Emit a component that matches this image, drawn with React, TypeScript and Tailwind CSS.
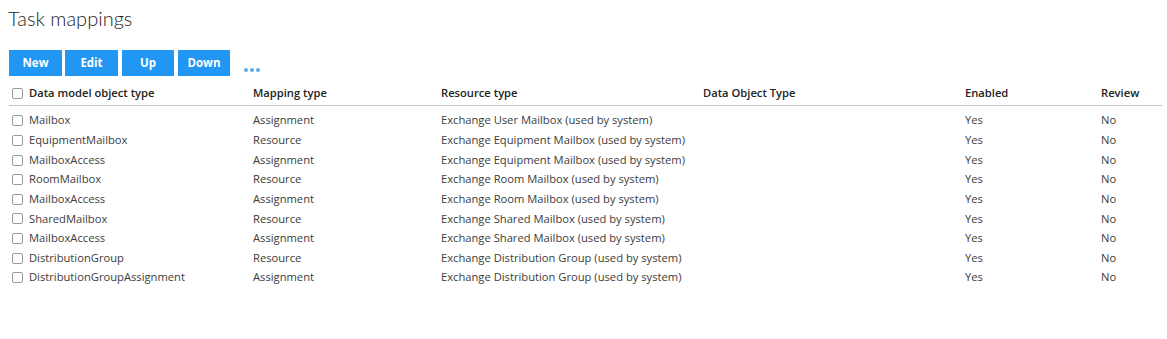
import React from "react";

// rows of the task mapping table
const rows = [
  { type: "Mailbox", mapping: "Assignment", resource: "Exchange User Mailbox (used by system)" },
  { type: "EquipmentMailbox", mapping: "Resource", resource: "Exchange Equipment Mailbox (used by system)" },
  { type: "MailboxAccess", mapping: "Assignment", resource: "Exchange Equipment Mailbox (used by system)" },
  { type: "RoomMailbox", mapping: "Resource", resource: "Exchange Room Mailbox (used by system)" },
  { type: "MailboxAccess", mapping: "Assignment", resource: "Exchange Room Mailbox (used by system)" },
  { type: "SharedMailbox", mapping: "Resource", resource: "Exchange Shared Mailbox (used by system)" },
  { type: "MailboxAccess", mapping: "Assignment", resource: "Exchange Shared Mailbox (used by system)" },
  { type: "DistributionGroup", mapping: "Resource", resource: "Exchange Distribution Group (used by system)" },
  { type: "DistributionGroupAssignment", mapping: "Assignment", resource: "Exchange Distribution Group (used by system)" },
];

const cols = "grid grid-cols-[244px_188px_262px_262px_136px_61px]";

function Box() {
  return <span className="inline-block w-[11px] h-[11px] shrink-0 rounded-[2px] border border-[#9a9a9a] bg-white" />;
}

export default function App() {
  return (
    <main
      className="min-h-screen bg-white pl-[9px] pt-[4px] text-[11.2px] text-[#3c3c3c]"
      style={{ fontFamily: '"Open Sans", sans-serif' }}
    >
      {/* Title */}
      <h1
        className="h-[28px] -ml-[1px] text-[20px] leading-[28px] font-light text-[#222]"
        style={{ fontFamily: "Lato, sans-serif" }}
      >
        Task mappings
      </h1>

      {/* Toolbar */}
      <div className="mt-[18px] flex items-center h-[26px]">
        {["New", "Edit", "Up", "Down"].map((b, i) => (
          <button
            key={b}
            className={`h-[26px] bg-[#2196f3] text-white font-bold text-[11.5px] ${
              i === 0 ? "w-[53px]" : i === 1 ? "w-[53px] ml-[3px]" : "w-[52px] ml-[4px]"
            }`}
          >
            {b}
          </button>
        ))}
        <div className="ml-[14px] mt-[14px] flex gap-[2px]">
          <span className="w-[4px] h-[4px] rounded-full bg-[#5aa9ea]" />
          <span className="w-[4px] h-[4px] rounded-full bg-[#5aa9ea]" />
          <span className="w-[4px] h-[4px] rounded-full bg-[#5aa9ea]" />
        </div>
      </div>

      {/* Table */}
      <div className="w-[1153px] mt-[7px]">
        <div className={`${cols} h-[23px] items-center pb-[1px] border-b border-[#c4c4c4] font-semibold text-[#222]`}>
          <div className="flex items-center gap-[6px] pl-[3px]">
            <Box />
            <span>Data model object type</span>
          </div>
          <div>Mapping type</div>
          <div>Resource type</div>
          <div>Data Object Type</div>
          <div>Enabled</div>
          <div>Review</div>
        </div>

        <div className="mt-[5px]">
          {rows.map((r, i) => (
            <div key={i} className={`${cols} h-[19.625px] items-center`}>
              <div className="flex items-center gap-[6px] pl-[3px]">
                <Box />
                <span>{r.type}</span>
              </div>
              <div>{r.mapping}</div>
              <div>{r.resource}</div>
              <div></div>
              <div>Yes</div>
              <div>No</div>
            </div>
          ))}
        </div>
      </div>
    </main>
  );
}
